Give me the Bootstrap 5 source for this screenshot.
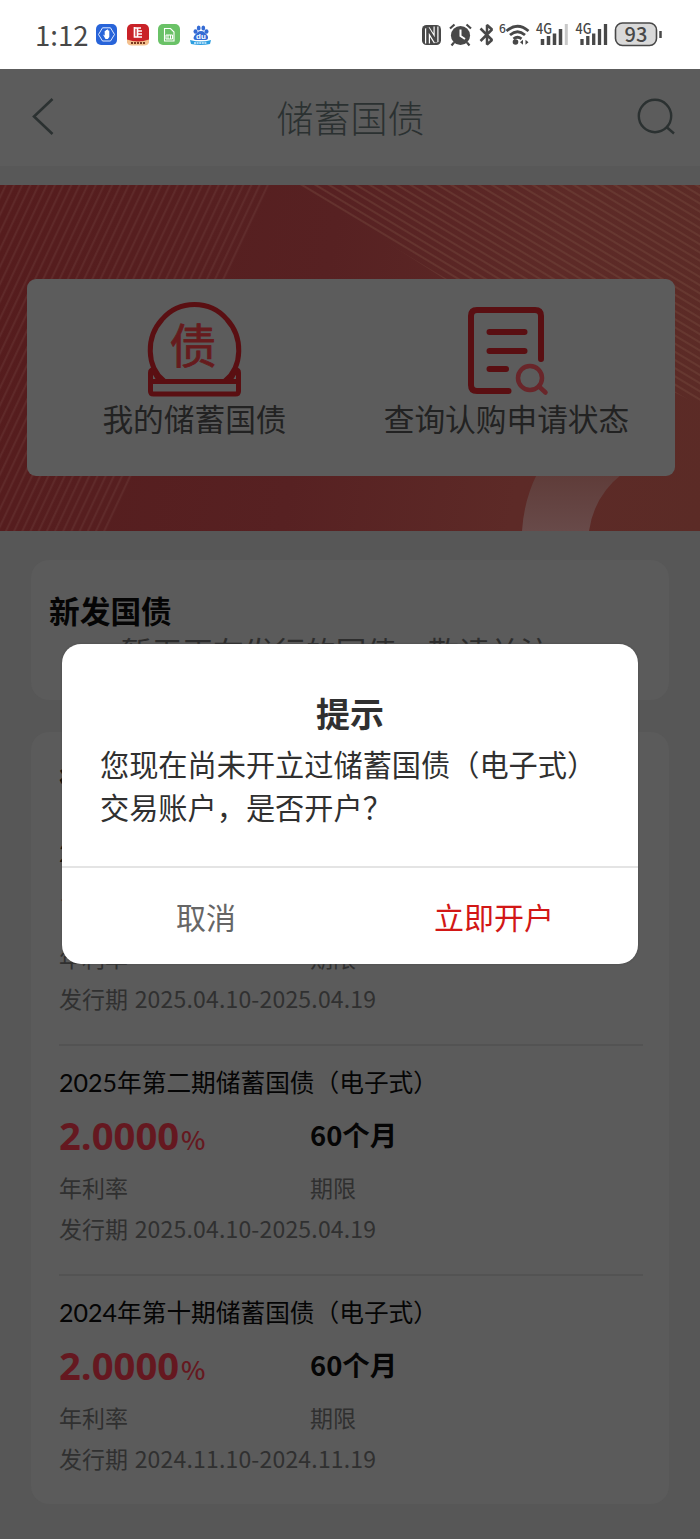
<!DOCTYPE html>
<html lang="zh-CN">
<head>
<meta charset="utf-8">
<meta name="viewport" content="width=device-width, initial-scale=1">
<title>储蓄国债</title>
<link href="https://cdn.jsdelivr.net/npm/bootstrap@5.3.0/dist/css/bootstrap.min.css" rel="stylesheet">
<style>
body{font-family:"Noto Sans CJK SC",sans-serif;background:#575757;width:700px;height:1539px;overflow:hidden;color:#050505}
.statusbar{height:69px;background:#fff}
.clock{font:27.500px/40px "Noto Sans CJK SC",sans-serif;color:#484848;width:60px;white-space:nowrap;margin-left:35px;padding-bottom:1px}
.app-head{height:97px;background:#5c5c5c}
.app-title{font-size:37px;font-weight:300;color:#2b3131;line-height:50px;padding:0 0 2px 11px}
.strip{height:19px;background:#585858}
.banner{height:346px;padding:94px 25px 55px 27px;background:linear-gradient(100deg,#551c1d 0%,#572122 45%,#5d2a27 75%,#5b2b26 100%)}
.banner-art{left:0;top:0}
.entry-panel{height:197px;border-radius:9px;background:#5c5c5c;color:#222}
.entry{font-size:30.7px;line-height:40px;white-space:nowrap}
.entry svg{display:block}
.panel{margin:0 31px;border-radius:18px;background:#5b5b5b}
.panel-new{height:140px;margin-top:29px;padding:29px 18px 0}
.panel-list{height:772px;margin-top:32px;padding:24px 26px 0 28px}
.section-title{font-size:30.7px;line-height:40px;font-weight:700}
.panel-new .section-title{padding-top:1px}
.empty-tip{font-size:30.7px;line-height:40px;color:#2d2d2d;margin-top:1px;padding-left:72px;white-space:nowrap}
.bond{height:230px;padding-top:20px}
.bond+.bond{border-top:2px solid #535353;padding-top:18px}
.bond-name{font-size:24.7px;line-height:34px;white-space:nowrap}
.bond-name span{font-family:Lato,sans-serif;font-size:25px}
.figures{height:71px}
.col-rate{width:251px}
.rate{font:700 38.2px/50px "Open Sans",sans-serif;color:#651820}
.pct{font:500 26px/40px "Noto Sans CJK SC",sans-serif;color:#651820;margin-left:2px}
.term{font-size:27.4px;line-height:40px;font-weight:700;padding-bottom:2px}
.dim{font-size:23px;line-height:34px;color:#303030;white-space:nowrap}
.dates{margin-top:7px}
.dates span{letter-spacing:.18px;margin-left:1.5px}
.dialog-box{left:62px;top:644px;width:576px;height:320px;border-radius:19px;background:#fff;color:#303030;box-shadow:0 0 2px #444}
.dialog-title{font-size:34px;line-height:48px;font-weight:700;padding-top:45px}
.dialog-text{font-size:29.2px;line-height:43px;padding:5px 0 0 38px;height:129px;white-space:nowrap}
.dialog-actions{height:98px;border-top:2px solid #e4e4e4}
.dialog-actions button{border:0;background:none;font-size:30px;line-height:40px;padding-bottom:2px}
.cancel{color:#666}
.confirm{color:#d21716}
</style>
</head>
<body class="position-relative">
<div class="statusbar d-flex align-items-center">
  <div class="clock">1:12</div>
  <svg width="117" height="24" viewBox="95 23 117 24" class="flex-shrink-0">
    <rect x="96" y="24" width="21" height="21" rx="5" fill="#2864d9"/>
    <path d="M102.500 27.800h8l4 6.700-4 6.500h-8l-4-6.500z" fill="none" stroke="#dfeaff" stroke-width="1"/>
    <path d="M103 34.500l1.700 1V31h1v-1h1.200v-.6h1.200v1h1.200v6.500l-1.500 2h-2.300z" fill="#fff"/>
    <rect x="127" y="24" width="22" height="21" rx="5" fill="#c92228"/>
    <path d="M127 39.500q11 4 22 0v2q0 4-5 4h-12q-5 0-5-4z" fill="#f4c18f"/>
    <path d="M134.500 27v10h7.500M134 28h7M137 31h5M137 34h5M137.500 28v9" stroke="#fff" stroke-width="1.700" fill="none"/>
    <path d="M131 43h14" stroke="#7b3a20" stroke-width="2" stroke-dasharray="2 1"/>
    <rect x="158" y="24" width="22" height="21" rx="5" fill="#6ac267"/>
    <path d="M164.500 28.500h6l3.500 3.500V41h-9.500z" fill="none" stroke="#fff" stroke-width="1.100"/>
    <path d="M166 35h6.500v4H166zM168 35v4M170.500 35v4" fill="none" stroke="#fff" stroke-width="1"/>
    <g fill="#356bd4"><ellipse cx="195.500" cy="31.500" rx="2" ry="2.300"/><ellipse cx="198.700" cy="28" rx="1.900" ry="2.500"/><ellipse cx="203.300" cy="28" rx="1.900" ry="2.500"/><ellipse cx="206.500" cy="31.500" rx="2" ry="2.300"/><path d="M201 31c3 0 4 2 6 4s1 5-1 5h-10c-3 0-3-3-1-5s3-4 6-4z"/></g>
    <path d="M190 40q11 3 21 0l-1 4q-9 2-19 0z" fill="#2b9ee0"/>
    <text x="201" y="39" font-family="Liberation Sans" font-size="8" font-weight="700" text-anchor="middle" fill="#fff">du</text>
    <path d="M194 43h13" stroke="#d8efff" stroke-width="1.500" stroke-dasharray="2 .6"/>
  </svg>
  <svg width="244" height="50" viewBox="420 10 244 50" class="ms-auto flex-shrink-0" fill="#484848" style="margin-right:36px">
    <rect x="422" y="25" width="19" height="20" rx="4.500"/>
    <path d="M427.500 43.500V28.500L436 42V26.500" fill="none" stroke="#fff" stroke-width="5" stroke-linejoin="bevel"/>
    <path d="M427.500 44V28L436 42V26" fill="none" stroke="#484848" stroke-width="2.600" stroke-linejoin="bevel"/>
    <circle cx="460.500" cy="35.500" r="9.600"/><path d="M460.500 29.500V36l4.500 3" stroke="#fff" stroke-width="2" fill="none"/>
    <path d="M450 28.500l4.500-4M471 28.500l-4.500-4M454 42.500l-2.500 3M467 42.500l2.500 3" stroke="#484848" stroke-width="2.200" fill="none"/>
    <path d="M480.500 28.500L492 40l-5 4.500V25l5 4.500L480.500 41" fill="none" stroke="#484848" stroke-width="2.500" stroke-linejoin="bevel"/>
    <text x="499" y="33" font-family="Noto Sans CJK SC" font-size="12" font-weight="500">6</text>
    <path d="M506.500 31q11-9.500 22 0M510 35q7.500-6.500 15 0M513.500 38.800q4-3 8 0" fill="none" stroke="#484848" stroke-width="2.800"/>
    <circle cx="515.500" cy="42" r="2.800"/><path d="M520 42.200l3-2.500v5zM528.500 42.200l-3-2.500v5z"/>
    <text x="536" y="34" font-family="Noto Sans CJK SC" font-size="14" font-weight="500" textLength="16" lengthAdjust="spacingAndGlyphs">4G</text>
    <path d="M542.500 39v6M548.500 36v9M554.500 33.500V45M560.500 29v16" stroke="#484848" stroke-width="3.500"/><path d="M566.300 24v21" stroke="#c8c8c8" stroke-width="3"/>
    <text x="575.500" y="34" font-family="Noto Sans CJK SC" font-size="14" font-weight="500" textLength="16" lengthAdjust="spacingAndGlyphs">4G</text>
    <path d="M582 39v6M587.800 36v9M593.700 33.500V45M599.500 29v16M605.500 24v21" stroke="#484848" stroke-width="3.300"/>
    <rect x="615.500" y="23" width="41" height="22.500" rx="7" fill="#d9d9d9" stroke="#484848" stroke-width="1.600"/>
    <text x="636" y="42" font-family="Noto Sans CJK SC" font-size="20" font-weight="500" text-anchor="middle">93</text>
    <path d="M660.500 31v7" stroke="#484848" stroke-width="2.500"/>
  </svg>
</div>

<header class="app-head d-flex align-items-center justify-content-between">
  <svg width="30" height="44" viewBox="27 95 30 44" fill="none" stroke="#2b3131" stroke-width="2.600" style="margin-left:27px"><path d="M52.500 98L34 115.500l18.500 17.500"/></svg>
  <div class="app-title">储蓄国债</div>
  <svg width="46" height="44" viewBox="633 95 46 44" fill="none" stroke="#2b3131" stroke-width="2.400" style="margin-right:21px"><circle cx="655" cy="115" r="16.200"/><path d="M666.500 126l7.500 6.500"/></svg>
</header>
<div class="strip"></div>

<section class="banner position-relative">
  <svg class="banner-art position-absolute" width="700" height="346" viewBox="0 185 700 346" aria-hidden="true">
    <defs>
      <pattern id="steep" width="7.400" height="20" patternUnits="userSpaceOnUse" patternTransform="rotate(25.300)"><path d="M3 0v20" stroke="#71423f" stroke-opacity=".38" stroke-width="1.800"/></pattern>
      <pattern id="slant" width="20" height="7" patternUnits="userSpaceOnUse" patternTransform="rotate(31)"><path d="M0 3h20" stroke="#7a5142" stroke-opacity=".45" stroke-width="1.600"/></pattern>
      <linearGradient id="ring" x1="0" x2="0" y1="0" y2="1"><stop stop-color="#5f3c39"/><stop offset="1" stop-color="#684a49"/></linearGradient>
    </defs>
    <path d="M0 185h273L110 531H0z" fill="url(#steep)"/>
    <path d="M297 185L443 278 700 405V185z" fill="url(#slant)"/>
    <path d="M522 531Q524 500 537 474H622Q594 496 589 531z" fill="url(#ring)"/>
  </svg>
  <div class="entry-panel position-relative d-flex">
    <div class="entry d-flex flex-column align-items-center" style="width:335px">
      <svg width="98" height="98" viewBox="146 300 98 98" fill="none" stroke="#5a0f12" stroke-width="5" stroke-linejoin="round" style="margin-top:21px">
        <path d="M164 381C146 366 146 337 162 319.500C179 299.500 210 299.500 227 319.500C243 337 243 366 225 381"/>
        <path d="M153 370q-2.500 0-2.500 3v18q0 3 3 3h82q3 0 3-3v-18q0-3-2.500-3l-7 11.500M153 370l7 11.500M151 381.500h87"/>
        <text x="193" y="363" font-family="Noto Sans CJK SC" font-size="47" text-anchor="middle" fill="#661b1d" stroke="#661b1d" stroke-width=".8">债</text>
      </svg>
      <div>我的储蓄国债</div>
    </div>
    <div class="entry d-flex flex-column align-items-center" style="width:289px">
      <svg width="98" height="98" viewBox="457 300 98 98" fill="none" stroke="#5a0f12" stroke-width="6" stroke-linecap="round" style="margin-top:21px">
        <path d="M507.500 391H476q-6 0-6-6V316q0-6 6-6h58q6 0 6 6v43M488.500 332h35M488.500 351h35M488.500 369h16.500"/>
        <g stroke="#69262a" stroke-width="4.500"><circle cx="529" cy="378" r="12"/><path d="M538 386.500l6.500 6"/></g>
      </svg>
      <div>查询认购申请状态</div>
    </div>
  </div>
</section>

<main>
  <section class="panel panel-new">
    <div class="section-title">新发国债</div>
    <div class="empty-tip">暂无正在发行的国债，敬请关注</div>
  </section>
  <section class="panel panel-list">
    <div class="section-title" style="height:58px;padding-top:2px">往期国债</div>
    <article class="bond">
      <div class="bond-name"><span>2025</span>年第一期储蓄国债（电子式）</div>
      <div class="figures d-flex align-items-center"><div class="col-rate d-flex align-items-baseline"><span class="rate">1.9300</span><span class="pct">%</span></div><div class="term">36个月</div></div>
      <div class="dim d-flex"><div class="col-rate">年利率</div><div>期限</div></div>
      <div class="dim dates">发行期 <span>2025.04.10-2025.04.19</span></div>
    </article>
    <article class="bond">
      <div class="bond-name"><span>2025</span>年第二期储蓄国债（电子式）</div>
      <div class="figures d-flex align-items-center"><div class="col-rate d-flex align-items-baseline"><span class="rate">2.0000</span><span class="pct">%</span></div><div class="term">60个月</div></div>
      <div class="dim d-flex"><div class="col-rate">年利率</div><div>期限</div></div>
      <div class="dim dates">发行期 <span>2025.04.10-2025.04.19</span></div>
    </article>
    <article class="bond">
      <div class="bond-name"><span>2024</span>年第十期储蓄国债（电子式）</div>
      <div class="figures d-flex align-items-center"><div class="col-rate d-flex align-items-baseline"><span class="rate">2.0000</span><span class="pct">%</span></div><div class="term">60个月</div></div>
      <div class="dim d-flex"><div class="col-rate">年利率</div><div>期限</div></div>
      <div class="dim dates">发行期 <span>2024.11.10-2024.11.19</span></div>
    </article>
  </section>
</main>

<div class="dialog-box position-absolute" role="dialog">
  <div class="dialog-title text-center">提示</div>
  <div class="dialog-text">您现在尚未开立过储蓄国债（电子式）<br>交易账户，是否开户？</div>
  <div class="dialog-actions d-flex">
    <button class="cancel w-50">取消</button>
    <button class="confirm w-50">立即开户</button>
  </div>
</div>
<script src="https://cdn.jsdelivr.net/npm/bootstrap@5.3.0/dist/js/bootstrap.bundle.min.js"></script>
</body>
</html>
